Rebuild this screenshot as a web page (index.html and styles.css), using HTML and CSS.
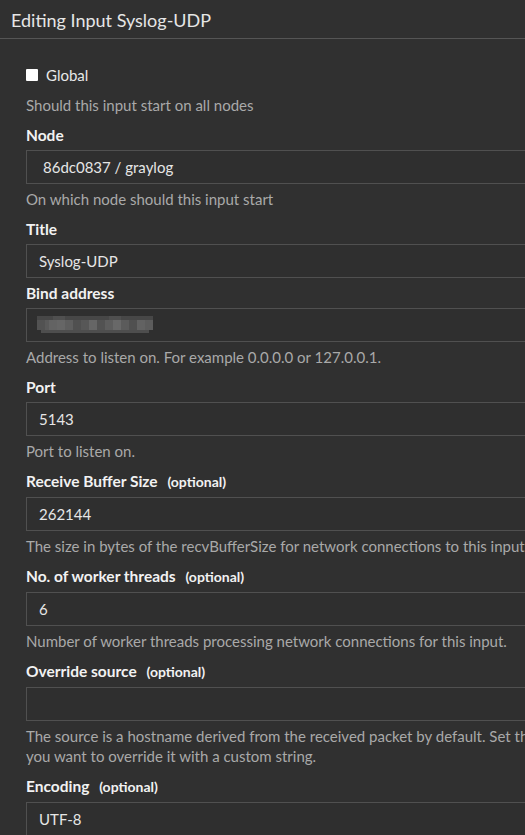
FILE: index.html
```html
<!DOCTYPE html>
<html>
<head>
<meta charset="utf-8">
<link rel="stylesheet" href="styles.css">
</head>
<body>
<div class="modal">
  <div class="modal-header">Editing Input Syslog-UDP</div>
  <div class="modal-body">
    <div class="check-row">
      <span class="checkbox"></span>
      <span class="check-label">Global</span>
    </div>
    <div class="help first-help">Should this input start on all nodes</div>

    <div class="group">
      <div class="label">Node</div>
      <div class="field select">86dc0837 / graylog</div>
      <div class="help">On which node should this input start</div>
    </div>

    <div class="group">
      <div class="label">Title</div>
      <div class="field">Syslog-UDP</div>
    </div>

    <div class="group">
      <div class="label">Bind address</div>
      <div class="field">
        <svg class="mosaic" width="116" height="18" viewBox="0 0 116 18">
          <rect x="0" y="0" width="116" height="4" fill="#474747"/>
          <rect x="0" y="4" width="116" height="10" fill="#5a5a5a"/>
          <rect x="4" y="14" width="108" height="3" fill="#4e4e4e"/>
          <rect x="0" y="4" width="8" height="10" fill="#525252"/>
          <rect x="12" y="4" width="8" height="10" fill="#636363"/>
          <rect x="20" y="4" width="8" height="10" fill="#666"/>
          <rect x="28" y="4" width="8" height="10" fill="#5e5e5e"/>
          <rect x="36" y="4" width="8" height="10" fill="#505050"/>
          <rect x="44" y="4" width="8" height="10" fill="#575757"/>
          <rect x="52" y="4" width="8" height="10" fill="#666"/>
          <rect x="60" y="4" width="8" height="10" fill="#525252"/>
          <rect x="68" y="4" width="8" height="10" fill="#5d5d5d"/>
          <rect x="76" y="4" width="8" height="10" fill="#686868"/>
          <rect x="84" y="4" width="8" height="10" fill="#5b5b5b"/>
          <rect x="92" y="4" width="8" height="10" fill="#505050"/>
          <rect x="100" y="4" width="8" height="10" fill="#626262"/>
          <rect x="108" y="4" width="8" height="10" fill="#5c5c5c"/>
          <rect x="16" y="0" width="12" height="4" fill="#505050"/>
          <rect x="72" y="0" width="12" height="4" fill="#4f4f4f"/>
        </svg>
      </div>
      <div class="help">Address to listen on. For example 0.0.0.0 or 127.0.0.1.</div>
    </div>

    <div class="group">
      <div class="label">Port</div>
      <div class="field">5143</div>
      <div class="help">Port to listen on.</div>
    </div>

    <div class="group">
      <div class="label">Receive Buffer Size <span class="opt">(optional)</span></div>
      <div class="field">262144</div>
      <div class="help">The size in bytes of the recvBufferSize for network connections to this input.</div>
    </div>

    <div class="group">
      <div class="label">No. of worker threads <span class="opt">(optional)</span></div>
      <div class="field">6</div>
      <div class="help">Number of worker threads processing network connections for this input.</div>
    </div>

    <div class="group">
      <div class="label">Override source <span class="opt">(optional)</span></div>
      <div class="field"></div>
      <div class="help">The source is a hostname derived from the received packet by default. Set this if<br>you want to override it with a custom string.</div>
    </div>

    <div class="group">
      <div class="label">Encoding <span class="opt">(optional)</span></div>
      <div class="field">UTF-8</div>
    </div>
  </div>
</div>
</body>
</html>
```
FILE: styles.css
```css
html, body {
  margin: 0;
  padding: 0;
  background: #303030;
  overflow: hidden;
}
body {
  font-family: Lato, "Liberation Sans", sans-serif;
  font-size: 15px;
  color: #e8e8e8;
}
.modal {
  width: 640px;
}
.modal-header {
  height: 39px;
  box-sizing: border-box;
  padding: 7px 11px 0;
  font-size: 18px;
  line-height: 26px;
  color: #e6e6e6;
  border-bottom: 1px solid #555;
}
.modal-body {
  padding: 26px 0 0 26px;
}
.check-row {
  display: flex;
  align-items: center;
  height: 20px;
}
.checkbox {
  width: 12px;
  height: 12px;
  background: #fff;
  border-radius: 1px;
  margin-right: 8px;
}
.check-label {
  color: #e8e8e8;
  line-height: 20px;
}
.help {
  color: #a9a9a9;
  line-height: 20px;
  margin: 5px 0 10px;
  white-space: nowrap;
}
.first-help {
  margin: 10px 0 10px;
}
.group {
  margin-bottom: 5px;
}
.label {
  font-weight: bold;
  font-size: 15.5px;
  color: #f2f2f2;
  line-height: 20px;
  margin-bottom: 5px;
}
.opt {
  font-size: 14px;
  margin-left: 6px;
}
.field {
  height: 34px;
  box-sizing: border-box;
  border: 1px solid #505050;
  background: #2f2f2f;
  padding: 0 12px;
  line-height: 32px;
  color: #e6e6e6;
  display: flex;
  align-items: center;
}
.select {
  padding-left: 16px;
}
.mosaic {
  display: block;
  margin-left: -2px;
}
```
